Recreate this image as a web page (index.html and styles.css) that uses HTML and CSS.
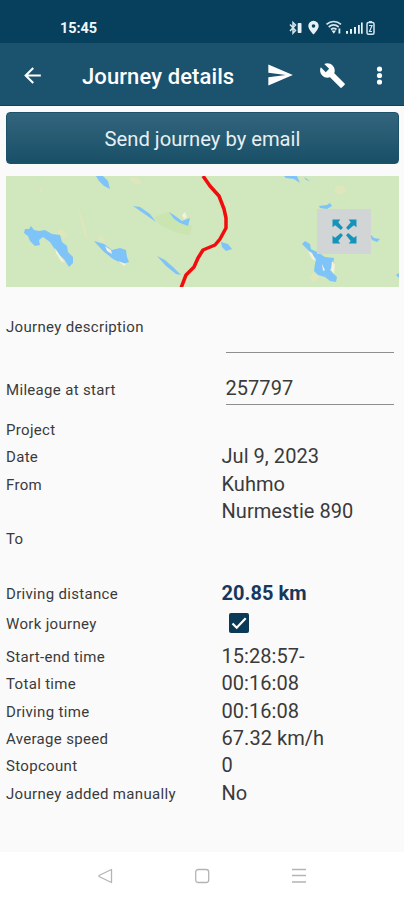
FILE: index.html
```html
<!DOCTYPE html>
<html lang="en">
<head>
<meta charset="utf-8">
<meta name="viewport" content="width=device-width, initial-scale=1">
<title>Journey details</title>
<link rel="stylesheet" href="styles.css">
</head>
<body>
<div class="status">
  <span class="clock">15:45</span>
  <svg class="status-icons" viewBox="286 16 92 24" width="92" height="24">
    <g fill="none" stroke="#d5e5ee" stroke-width="1.5">
      <path d="M290 24.500l5.500 6-2.500 2.700V22.500l2.500 2.500-5.500 6"/>
      <path d="M326.500 24.300c4.300-3.700 10.200-3.700 14.500 0M328.700 27c3-2.500 7-2.500 10 0M331 29.500c1.700-1.300 3.800-1.300 5.500 0" stroke-width="1.700"/>
      <rect x="367" y="22.500" width="7" height="11.700" rx="1.500"/>
      <path d="M369 21.500h3M369 25.500h3l-2.500 6h2.500" stroke-width="1.200"/>
    </g>
    <g fill="#e6f0f6">
      <rect x="297.700" y="23" width="3.800" height="10" rx=".8"/>
      <path fill-rule="evenodd" d="M313.500 20.800a5.200 5.200 0 0 0-5.200 5.200c0 3.500 5.200 8.500 5.200 8.500s5.200-5 5.200-8.500a5.200 5.200 0 0 0-5.200-5.200zm0 3.400a1.800 1.800 0 1 1 0 3.600 1.800 1.800 0 0 1 0-3.600z"/>
      <path d="M331.500 30.500h4.500l-2.200 3.300zM338.500 28.500h1.800v5h-1.800z"/>
      <path d="M346 31h2v2.700h-2zM350 29h2v4.700h-2zM354 27h2v6.700h-2zM358 25h1.800v8.700H358zM361 22.500h1.700v11.200H361z"/>
    </g>
  </svg>
</div>
<header class="bar">
  <svg class="back" viewBox="0 0 24 24"><path d="M20 11H7.830l5.590-5.590L12 4l-8 8 8 8 1.410-1.410L7.830 13H20z"/></svg>
  <h1>Journey details</h1>
  <svg class="send" viewBox="0 0 24 24"><path d="M2 21l21-9L2 3v7l15 2-15 2z"/></svg>
  <svg class="wrench" viewBox="0 0 24 24"><path d="M22.700 19l-9.100-9.100c.9-2.300.4-5-1.500-6.900-2-2-5-2.400-7.400-1.300L9 6 6 9 1.600 4.700C.4 7.100.9 10.100 2.900 12.100c1.900 1.900 4.600 2.400 6.900 1.500l9.100 9.100c.4.4 1 .4 1.400 0l2.300-2.300c.5-.4.5-1.100.1-1.400z"/></svg>
  <svg class="more" viewBox="0 0 24 24"><circle cx="12" cy="6.200" r="2.300"/><circle cx="12" cy="12" r="2.300"/><circle cx="12" cy="17.800" r="2.300"/></svg>
</header>
<main>
  <button class="email">Send journey by email</button>
  <div class="map">
    <svg viewBox="6 176 393 111.500" width="393" height="111.500">
      <g fill="#e0e6bc">
        <path d="M130 177l8 1 4 5-5 2-6-4zM40 188l3 2-1 4-3-3zM335 187l8-2 3 5-4 5-7-2zM78 207l5 13 5 19-2-1-5-16zM57 232l4-3 7 7-4 2zM98 238l3-3 4 6-3 2zM226 200l4 4-2 7zM309 277l5-4 5 4-5 6z"/>
      </g>
      <path fill="#cbe5b1" d="M154 217l14-5 15 10 9 4-2 9-12-2-18-8z"/>
      <g fill="#7fc4f8">
        <path d="M96 176h7l5 5 2 8-6-3-5-5z"/>
        <path d="M25 229l4 0 2-3 3 4 5 1 6-1 7 4 8 1 2 7 5 4 1 6 5 5 0 6-4 4-5-8-6-5-4-6-4-6-7-5-4 3 1 5-5 1-5-5-2-5-4-3z"/>
        <path d="M94 241l10 3 8 6 8-2 6 2 1 7 2 5-6 2-10-5-10-8z"/>
        <path d="M133 206l7 1 10 7 6 8-10-7z"/>
        <path d="M169 212l5 3 8 6 8-3-2 8-8-3-6-4z"/>
        <path d="M157 256l8 4 8 7 8 8-5-1-10-8z"/>
        <path d="M221 242l7 2 4 5-6 2-4-4z"/>
        <path d="M284 176h13l3 7-6-4-8-1zM304 177l6 4-4-1z"/>
        <path d="M319 206l8-1 3-2 2 3-5 3-7-1z"/>
        <path d="M370 234l4 4 6 1-3 3-5-2z"/>
        <path d="M302 244l3-3 5 3 1 5 8 4 6 4 9 1-1 7-3 5 7 7-1 5-6-1-5-4-7-2-4-4 1-7 1-5-6-7z"/>
        <path d="M396 275l3-2v5z"/>
      </g>
      <path fill="#f5f1dc" d="M55 248l4 6 6 9-4-2-5-8zM105 246l6 4 1 4-5-3zM118 261l8 3-2 2zM182 215l3-3 2 5-3 2zM308 251l4 2 4 8-4-2zM332 261l3 4-1 9-3-4zM322 264l3 6-2 1z"/>
      <path class="route" d="M203 176l7 10 9 10 5 13 2 9 0 10-6 11-5 6-12 5-5 8-4 9-8 8-5 13"/>
    </svg>
    <div class="expand">
      <svg viewBox="0 0 24 24"><path d="M.5.5h7.500L6 3l4.500 5.500-2 2L3 6 .5 8zM23.500.5V8L21 6l-5.500 4.500-2-2L18 3 16 .5zM.5 23.500V16L3 18l5.500-4.500 2 2L6 21l2 2.500zM23.500 23.500H16l2-2.500-4.500-5.500 2-2L21 18l2.500-2z"/></svg>
    </div>
  </div>
  <dl>
    <div class="row desc"><dt>Journey description</dt><dd class="field"></dd></div>
    <div class="row mileage"><dt>Mileage at start</dt><dd class="field">257797</dd></div>
    <div class="row"><dt>Project</dt><dd></dd></div>
    <div class="row"><dt>Date</dt><dd>Jul 9, 2023</dd></div>
    <div class="row from"><dt>From</dt><dd>Kuhmo<br>Nurmestie 890</dd></div>
    <div class="row to"><dt>To</dt><dd></dd></div>
    <div class="row"><dt>Driving distance</dt><dd class="distance">20.85 km</dd></div>
    <div class="row work"><dt>Work journey</dt><dd><span class="check"><svg viewBox="0 0 20 20"><path d="M3.500 10.500l4.200 4.200 9-9.500"/></svg></span></dd></div>
    <div class="row"><dt>Start-end time</dt><dd>15:28:57-</dd></div>
    <div class="row"><dt>Total time</dt><dd>00:16:08</dd></div>
    <div class="row"><dt>Driving time</dt><dd>00:16:08</dd></div>
    <div class="row"><dt>Average speed</dt><dd>67.32 km/h</dd></div>
    <div class="row"><dt>Stopcount</dt><dd>0</dd></div>
    <div class="row"><dt>Journey added manually</dt><dd>No</dd></div>
  </dl>
</main>
<nav>
  <svg viewBox="0 0 16 16"><path d="M14.500 1.500v13L2 8.500v-1z"/></svg>
  <svg viewBox="0 0 16 16"><rect x="1.700" y="1.500" width="13" height="13" rx="2.500"/></svg>
  <svg viewBox="0 0 16 16"><path d="M1 1.500h14M1 7.500h14M1 14h14"/></svg>
</nav>
</body>
</html>
```
FILE: styles.css
```css
* { box-sizing: border-box; }
body {
  margin: 0;
  width: 404px;
  height: 900px;
  display: flex;
  flex-direction: column;
  background: #fafafa;
  color: #3a3a3a;
  font-family: Roboto, "Liberation Sans", sans-serif;
  overflow: hidden;
}
svg { display: block; flex: none; }
.status {
  height: 43px;
  flex: none;
  display: flex;
  align-items: center;
  justify-content: space-between;
  padding: 13px 26px 0 60px;
  background: #07405c;
  color: #f1f6f9;
}
.clock { font-size: 14.500px; font-weight: 700; letter-spacing: -.1px; padding-top: 1px; }
.bar {
  height: 63px;
  flex: none;
  display: flex;
  align-items: center;
  padding: 2px 11px 0 20px;
  background: #1b526d;
  border-bottom: 1px solid #0f4260;
  fill: #fff;
  color: #fff;
}
h1 { margin: 2px 0 0 37px; width: 184px; font-size: 22px; font-weight: 500; letter-spacing: .1px; white-space: nowrap; }
.back { width: 25px; height: 25px; }
.send { width: 28px; height: 28px; margin-right: 25px; }
.wrench { width: 27px; height: 27px; margin-right: 20px; }
.more { width: 27px; height: 27px; }
main { flex: 1; padding: 6px 5px 0 6px; }
.email {
  display: block;
  width: 393px;
  height: 52px;
  padding: 2px 0 0;
  border: 1px solid #1c536b;
  border-radius: 4px;
  background: linear-gradient(#33657d, #195067);
  color: #e6eff3;
  font: 400 20.200px Roboto, sans-serif;
}
.map { position: relative; width: 393px; height: 111.500px; margin-top: 11.500px; background: #d1e7bd; }
.route { fill: none; stroke: #f20d0d; stroke-width: 3.500; stroke-linejoin: round; }
.expand {
  position: absolute;
  left: 311px;
  top: 33px;
  width: 54px;
  height: 45px;
  display: grid;
  place-items: center;
  background: #d2d5d5;
}
.expand svg { width: 25px; height: 25px; fill: #1494ba; }
dl { margin: 13px 0 0; }
.row { display: grid; grid-template-columns: 215.500px 1fr; height: 27.350px; line-height: 27.350px; }
dt { font-size: 15px; letter-spacing: .32px; padding-top: 1px; white-space: nowrap; }
dd { margin: 0; font-size: 20px; letter-spacing: .05px; white-space: nowrap; }
.field { width: 168.500px; margin-left: 4px; border-bottom: 1px solid #8d8d8d; }
.desc { height: 53px; line-height: 52px; }
.mileage { height: 36px; margin: 15px 0 12px; line-height: 30px; }
.mileage .field { padding-top: 5px; }
.mileage dt { padding-top: 7px; }
.desc dt { padding-top: 1px; }
.from { height: 54.700px; }
.to { margin-bottom: 27px; }
.distance { color: #17385a; font-weight: 700; }
.work { height: 36px; line-height: 32px; }
.check { display: block; width: 20px; height: 20px; margin: 6px 0 0 7.500px; background: #0b3a56; border-radius: 2px; }
.check path { fill: none; stroke: #fff; stroke-width: 2.200; }
nav {
  height: 48px;
  flex: none;
  display: flex;
  justify-content: center;
  gap: 81px;
  padding-top: 16px;
  background: #fff;
}
nav svg { width: 16px; height: 16px; fill: none; stroke: #b4b4b4; stroke-width: 1.300; stroke-linejoin: round; }
```
